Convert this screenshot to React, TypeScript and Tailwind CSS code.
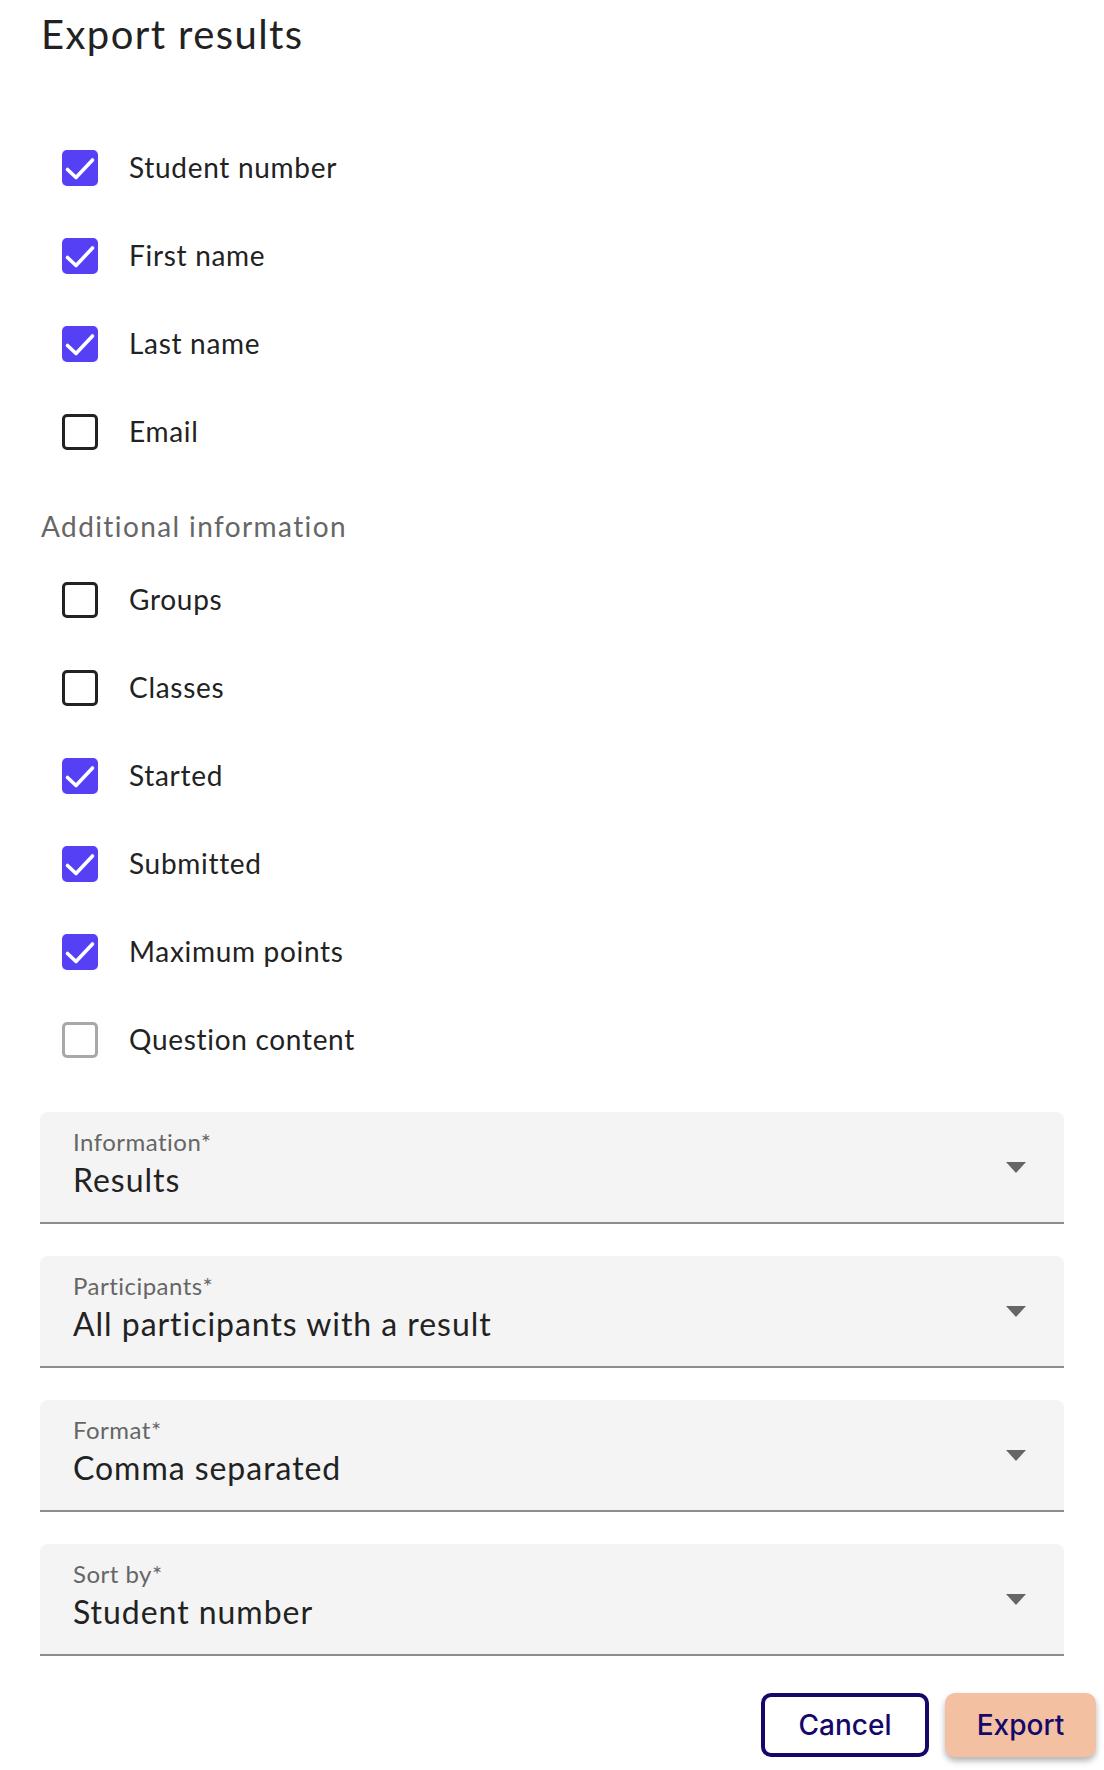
import { useState } from "react";

type Option = { label: string; checked: boolean; disabled?: boolean };

const basicFields: Option[] = [
  { label: "Student number", checked: true },
  { label: "First name", checked: true },
  { label: "Last name", checked: true },
  { label: "Email", checked: false },
];

const extraFields: Option[] = [
  { label: "Groups", checked: false },
  { label: "Classes", checked: false },
  { label: "Started", checked: true },
  { label: "Submitted", checked: true },
  { label: "Maximum points", checked: true },
  { label: "Question content", checked: false, disabled: true },
];

const selects = [
  { label: "Information", value: "Results" },
  { label: "Participants", value: "All participants with a result" },
  { label: "Format", value: "Comma separated" },
  { label: "Sort by", value: "Student number" },
];

function CheckRow({ option }: { option: Option }) {
  const [checked, setChecked] = useState(option.checked);
  return (
    <label className="flex h-[88px] items-center cursor-pointer">
      <button
        type="button"
        onClick={() => !option.disabled && setChecked(!checked)}
        className="ml-[62px] flex h-9 w-9 items-center justify-center"
      >
        {checked ? (
          <span className="flex h-9 w-9 items-center justify-center rounded-[5px] bg-[#5540f6]">
            <svg width="36" height="36" viewBox="0 0 36 36" fill="none">
              <polyline points="5.5,19.5 14,27.5 30.5,10" stroke="white" strokeWidth="3.6" strokeLinecap="round" strokeLinejoin="round" />
            </svg>
          </span>
        ) : (
          <span
            className={
              option.disabled
                ? "h-9 w-9 rounded-[5px] border-[3px] border-[#a8a8a8]"
                : "h-9 w-9 rounded-[5px] border-[3px] border-[#222222]"
            }
          />
        )}
      </button>
      <span className="ml-[31px] mb-[3px] text-[28px] leading-[40px] tracking-[0.025em] text-[#222222]">{option.label}</span>
    </label>
  );
}

function SelectField({ label, value }: { label: string; value: string }) {
  return (
    <div className="relative h-[112px] rounded-t-[8px] border-b-2 border-[#8c8c8c] bg-[#f4f4f4] pl-[33px]">
      <div className="pt-[16px] text-[24px] leading-[28px] tracking-[0.02em] text-[#666666]">{label}*</div>
      <div className="mt-[4px] text-[32px] leading-[40px] tracking-[0.03em] text-[#222222]">{value}</div>
      <svg className="absolute right-[38px] top-[50px]" width="20" height="11" viewBox="0 0 20 11">
        <polygon points="0,0 20,0 10,11" fill="#666666" />
      </svg>
    </div>
  );
}

export default function App() {
  return (
    <div className="w-[1104px] h-[1770px] bg-white font-['Lato','Noto_Sans',sans-serif]">
      <h1 className="pl-[41px] pt-[10px] text-[40px] leading-[48px] tracking-[0.035em] text-[#222222]">Export results</h1>

      <div className="mt-[66px]">
        {basicFields.map((o) => (
          <CheckRow key={o.label} option={o} />
        ))}
      </div>

      <div className="pl-[41px] pt-[30px] pb-[10px] text-[28px] leading-[40px] tracking-[0.05em] text-[#666666]">
        Additional information
      </div>

      <div>
        {extraFields.map((o) => (
          <CheckRow key={o.label} option={o} />
        ))}
      </div>

      <div className="mt-[28px] flex flex-col gap-8 px-10">
        {selects.map((s) => (
          <SelectField key={s.label} label={s.label} value={s.value} />
        ))}
      </div>

      <div className="mt-[37px] flex justify-end gap-4 pr-2">
        <button className="h-16 w-[168px] rounded-[10px] border-4 border-[#150869] bg-white font-['Inter',sans-serif] text-[28px] font-medium text-[#150869]">
          Cancel
        </button>
        <button className="h-16 w-[151px] rounded-[10px] bg-[#f3c1a2] font-['Inter',sans-serif] text-[28px] font-medium text-[#150869] shadow-[0_4px_6px_rgba(0,0,0,0.3)]">
          Export
        </button>
      </div>
    </div>
  );
}
